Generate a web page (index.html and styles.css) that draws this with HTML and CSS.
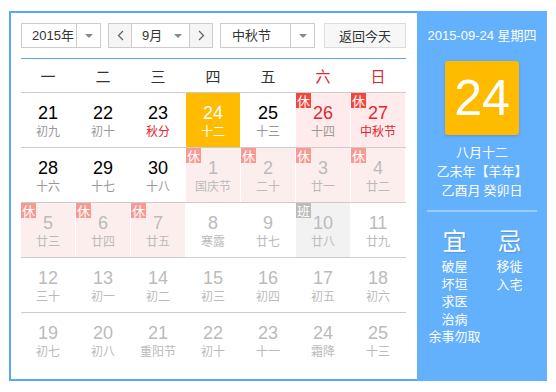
FILE: index.html
```html
<!DOCTYPE html>
<html lang="zh-CN">
<head>
    <meta charset="UTF-8">
    <meta name="viewport" content="width=device-width, initial-scale=1.0">
    <title>万年历</title>
    <link rel="stylesheet" href="styles.css">
</head>
<body>
    <div class="calendar">
        <div class="main">
            <div class="toolbar">
                <div class="select year-select">
                    <span class="select-text">2015年</span>
                    <span class="select-arrow"><i class="caret"></i></span>
                </div>
                <div class="select month-select">
                    <span class="nav-btn">
                        <svg width="7" height="11" viewBox="0 0 7 11"><polyline points="6,1 1.5,5.5 6,10" fill="none" stroke="#666" stroke-width="1.3"/></svg>
                    </span>
                    <span class="select-text">9月</span>
                    <span class="select-arrow plain"><i class="caret"></i></span>
                    <span class="nav-btn next">
                        <svg width="7" height="11" viewBox="0 0 7 11"><polyline points="1,1 5.5,5.5 1,10" fill="none" stroke="#666" stroke-width="1.3"/></svg>
                    </span>
                </div>
                <div class="select holiday-select">
                    <span class="select-text">中秋节</span>
                    <span class="select-arrow"><i class="caret"></i></span>
                </div>
                <button class="today-btn">返回今天</button>
            </div>

            <div class="weekdays">
                <span>一</span><span>二</span><span>三</span><span>四</span><span>五</span>
                <span class="red">六</span><span class="red">日</span>
            </div>

            <div class="week">
                <div class="day"><b>21</b><em>初九</em></div>
                <div class="day"><b>22</b><em>初十</em></div>
                <div class="day"><b>23</b><em class="red">秋分</em></div>
                <div class="day today"><b>24</b><em>十二</em></div>
                <div class="day"><b>25</b><em>十三</em></div>
                <div class="day rest"><i class="tag">休</i><b class="red">26</b><em>十四</em></div>
                <div class="day rest"><i class="tag">休</i><b class="red">27</b><em class="red">中秋节</em></div>
            </div>
            <div class="week">
                <div class="day"><b>28</b><em>十六</em></div>
                <div class="day"><b>29</b><em>十七</em></div>
                <div class="day"><b>30</b><em>十八</em></div>
                <div class="day other rest"><i class="tag">休</i><b>1</b><em>国庆节</em></div>
                <div class="day other rest"><i class="tag">休</i><b>2</b><em>二十</em></div>
                <div class="day other rest"><i class="tag">休</i><b>3</b><em>廿一</em></div>
                <div class="day other rest"><i class="tag">休</i><b>4</b><em>廿二</em></div>
            </div>
            <div class="week">
                <div class="day other rest"><i class="tag">休</i><b>5</b><em>廿三</em></div>
                <div class="day other rest"><i class="tag">休</i><b>6</b><em>廿四</em></div>
                <div class="day other rest"><i class="tag">休</i><b>7</b><em>廿五</em></div>
                <div class="day other"><b>8</b><em>寒露</em></div>
                <div class="day other"><b>9</b><em>廿七</em></div>
                <div class="day other work"><i class="tag">班</i><b>10</b><em>廿八</em></div>
                <div class="day other"><b>11</b><em>廿九</em></div>
            </div>
            <div class="week">
                <div class="day other"><b>12</b><em>三十</em></div>
                <div class="day other"><b>13</b><em>初一</em></div>
                <div class="day other"><b>14</b><em>初二</em></div>
                <div class="day other"><b>15</b><em>初三</em></div>
                <div class="day other"><b>16</b><em>初四</em></div>
                <div class="day other"><b>17</b><em>初五</em></div>
                <div class="day other"><b>18</b><em>初六</em></div>
            </div>
            <div class="week">
                <div class="day other"><b>19</b><em>初七</em></div>
                <div class="day other"><b>20</b><em>初八</em></div>
                <div class="day other"><b>21</b><em>重阳节</em></div>
                <div class="day other"><b>22</b><em>初十</em></div>
                <div class="day other"><b>23</b><em>十一</em></div>
                <div class="day other"><b>24</b><em>霜降</em></div>
                <div class="day other"><b>25</b><em>十三</em></div>
            </div>
        </div>

        <div class="side">
            <div class="side-date">2015-09-24 星期四</div>
            <div class="side-day">24</div>
            <div class="side-lunar">
                <p>八月十二</p>
                <p>乙未年【羊年】</p>
                <p>乙酉月 癸卯日</p>
            </div>
            <div class="side-line"></div>
            <div class="yiji">
                <div class="yiji-col">
                    <h3>宜</h3>
                    <p>破屋</p>
                    <p>坏垣</p>
                    <p>求医</p>
                    <p>治病</p>
                    <p>余事勿取</p>
                </div>
                <div class="yiji-col">
                    <h3>忌</h3>
                    <p>移徙</p>
                    <p>入宅</p>
                </div>
            </div>
        </div>
    </div>
</body>
</html>
```

FILE: styles.css
```css
body {
    margin: 0;
    padding: 0;
    background: #fff;
    font-family: "Liberation Sans", "Noto Sans CJK SC", Arial, sans-serif;
    color: #333;
}
.calendar {
    display: flex;
    width: 538px;
    height: 370px;
    margin: 11px 0 0 9px;
}
.main {
    width: 408px;
    padding: 10px 11px 0 10px;
    box-sizing: border-box;
    border: 2px solid #58a8f8;
    border-right: none;
}
.toolbar {
    display: flex;
    height: 25px;
    padding-bottom: 10px;
    border-bottom: 1px solid #58a8f8;
}
.select {
    display: flex;
    height: 25px;
    box-sizing: border-box;
    border: 1px solid #ccc;
    font-size: 13px;
    line-height: 23px;
    color: #333;
    white-space: nowrap;
}
.select-text {
    flex: 1;
    min-width: 0;
    padding-left: 10px;
}
.select-arrow {
    width: 23px;
    flex-shrink: 0;
    border-left: 1px solid #ccc;
    display: flex;
    align-items: center;
    justify-content: center;
}
.caret {
    width: 0;
    height: 0;
    border-left: 4px solid transparent;
    border-right: 4px solid transparent;
    border-top: 4px solid #888;
}
.year-select {
    width: 80px;
}
.month-select {
    width: 105px;
    margin-left: 7px;
}
.month-select .select-arrow.plain {
    border-left: none;
}
.nav-btn {
    width: 22px;
    flex-shrink: 0;
    background: #f5f5f5;
    border-right: 1px solid #ccc;
    display: flex;
    align-items: center;
    justify-content: center;
}
.nav-btn.next {
    border-right: none;
    border-left: 1px solid #ccc;
}
.holiday-select {
    width: 95px;
    margin-left: 7px;
}
.holiday-select .select-text {
    padding-left: 11px;
}
.today-btn {
    width: 82px;
    height: 25px;
    margin-left: 9px;
    padding: 0;
    background: #f7f7f7;
    border: 1px solid #ddd;
    font-family: "Liberation Sans", "Noto Sans CJK SC", sans-serif;
    font-size: 13px;
    color: #333;
}
.weekdays {
    display: grid;
    grid-template-columns: repeat(7, 54px);
    column-gap: 1px;
    height: 33px;
    line-height: 33px;
    border-bottom: 1px solid #ccc;
    font-family: "Noto Sans CJK SC", sans-serif;
    font-size: 15px;
    text-align: center;
    color: #333;
}
.red {
    color: #e3262d !important;
}
.week {
    display: grid;
    grid-template-columns: repeat(7, 54px);
    column-gap: 1px;
    border-bottom: 1px solid #ccc;
}
.week:last-child {
    border-bottom: none;
}
.day {
    position: relative;
    height: 54px;
    padding-top: 10px;
    box-sizing: border-box;
    text-align: center;
}
.day b {
    display: block;
    font-weight: normal;
    font-size: 18px;
    line-height: 20px;
    color: #000;
}
.day em {
    display: block;
    font-style: normal;
    font-family: "Noto Sans CJK SC", sans-serif;
    font-size: 12px;
    line-height: 16px;
    color: #999;
}
.day.today {
    background: #ffbb00;
}
.day.today b,
.day.today em {
    color: #fff;
}
.day.rest {
    background: #ffebeb;
}
.day.other b,
.day.other em {
    color: #bbb;
}
.day.other.rest {
    background: #fdeeee;
}
.day.other.work {
    background: #f2f2f2;
}
.tag {
    position: absolute;
    top: 0;
    left: 0;
    width: 15px;
    height: 15px;
    background: #f3473d;
    color: #fff;
    font-style: normal;
    font-family: "Noto Sans CJK SC", sans-serif;
    font-size: 13px;
    line-height: 15px;
    text-align: center;
}
.other .tag {
    background: #f79a94;
}
.work .tag {
    background: #bbb;
}
.side {
    width: 130px;
    height: 370px;
    background: #63b0fd;
    color: #fff;
    text-align: center;
    padding-top: 15px;
    box-sizing: border-box;
}
.side-date {
    font-size: 13px;
    line-height: 20px;
}
.side-day {
    width: 74px;
    height: 74px;
    margin: 15px auto 0;
    background: #ffbb00;
    border-radius: 3px;
    box-shadow: 0 1px 3px rgba(0, 0, 0, 0.15);
    font-family: "Liberation Sans", Arial, sans-serif;
    font-size: 50px;
    line-height: 74px;
}
.side-lunar {
    margin-top: 7px;
    font-family: "Noto Sans CJK SC", sans-serif;
    font-size: 13px;
    line-height: 19px;
}
.side-lunar p {
    margin: 0;
}
.side-line {
    width: 110px;
    height: 2px;
    margin: 11px auto 0;
    background: #9ccdfd;
}
.yiji {
    display: flex;
    width: 110px;
    margin: 13px auto 0;
    font-family: "Noto Sans CJK SC", sans-serif;
}
.yiji-col {
    width: 55px;
}
.yiji h3 {
    margin: 0;
    font-size: 24px;
    font-weight: normal;
    line-height: 30px;
    text-shadow: 1px 1px 1px rgba(0, 0, 0, 0.15);
}
.yiji p {
    margin: 0;
    font-size: 13px;
    line-height: 17.5px;
    white-space: nowrap;
}
.yiji h3 + p {
    margin-top: 2px;
}
```
